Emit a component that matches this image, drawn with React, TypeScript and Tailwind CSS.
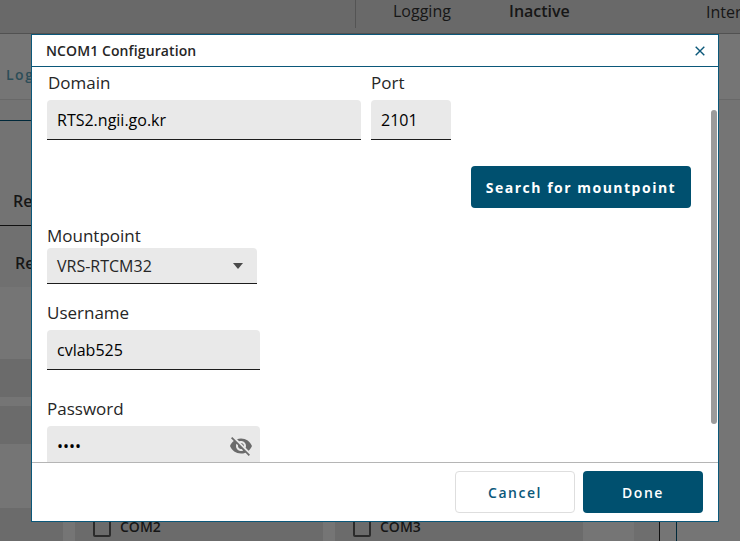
import React from "react";

const label = "text-[17px] leading-6 text-[#262626]";
const field =
  "flex items-center rounded-t-[4px] border-b border-[#1c1c1c] bg-[#e9e9e9] px-[10px] text-[16px] text-black";

function StatusHeader() {
  return (
    <header className="flex h-[34px] items-start border-b border-[#515151] bg-[#696969] text-[16px] leading-[22px] text-[#161616]">
      <div className="h-[28px] w-[356px] shrink-0 border-r border-[#545454]" />
      <span className="ml-[37px] w-[116px] shrink-0">Logging</span>
      <span className="w-[197px] shrink-0 font-semibold">Inactive</span>
      <span className="mt-px whitespace-nowrap">Inter</span>
    </header>
  );
}

function PortCell({ name, className }: { name: string; className: string }) {
  return (
    <div className={"flex h-full bg-[#6b6b6b] pl-[18px] text-[14px] font-semibold text-[#161616] " + className}>
      <span className="mt-[10px] h-[19px] w-[18px] rounded-[2px] border-2 border-[#2b2b2b]" />
      <span className="ml-[9px] mt-[9px] leading-5">{name}</span>
    </div>
  );
}

function Backdrop() {
  return (
    <div className="flex h-[541px] w-[740px] flex-col overflow-hidden bg-[#757575]">
      <StatusHeader />
      <nav className="flex h-[66px] items-center border-b border-[#686868] pl-[6px] pt-4 text-[14px] font-semibold tracking-[1.5px] text-[#2c4d58]">
        Log
      </nav>
      <div className="h-[20px] bg-[#737373]" />
      <section className="flex flex-1">
        <div className="flex w-[677px] flex-col border-r border-t border-[#00293a] text-[16px] font-semibold text-[#161616]">
          <div className="flex h-[105px] items-end border-b border-[#101010] bg-[#737373] pb-[12px] pl-[13px]">Re</div>
          <div className="flex h-[61px] items-center bg-[#707070] pl-[15px] pt-[13px]">Re</div>
          <div className="h-[72px]" />
          <div className="h-[38px] bg-[#6b6b6b]" />
          <div className="h-[9px]" />
          <div className="h-[38px] bg-[#6b6b6b]" />
          <div className="h-[64px]" />
          <div className="flex h-[33px]">
            <div className="w-[63px] bg-[#6b6b6b]" />
            <PortCell name="COM2" className="ml-[12px] w-[248px]" />
            <PortCell name="COM3" className="ml-[12px] w-[248px]" />
            <div className="ml-[51px] w-[26px] border-r border-[#101010] bg-[#6e6e6e]" />
          </div>
        </div>
      </section>
    </div>
  );
}

function HiddenEye() {
  return (
    <svg viewBox="0 0 24 24" className="h-6 w-6 fill-[#6b6b6b]">
      <path d="M12 7c2.76 0 5 2.24 5 5 0 .65-.13 1.26-.36 1.83l2.92 2.92c1.51-1.26 2.7-2.89 3.43-4.75-1.73-4.39-6-7.5-11-7.5-1.4 0-2.74.25-3.98.7l2.16 2.16C10.74 7.13 11.35 7 12 7zM2 4.27l2.28 2.28.46.46C3.08 8.3 1.78 10.02 1 12c1.73 4.39 6 7.5 11 7.5 1.55 0 3.03-.3 4.38-.84l.42.42L19.73 22 21 20.73 3.27 3 2 4.27zM7.53 9.8l1.55 1.55c-.05.21-.08.43-.08.65 0 1.66 1.34 3 3 3 .22 0 .44-.03.65-.08l1.55 1.55c-.67.33-1.41.53-2.2.53-2.76 0-5-2.24-5-5 0-.79.2-1.53.53-2.2zm4.31-.78l3.15 3.15.02-.16c0-1.66-1.34-3-3-3l-.17.01z" />
    </svg>
  );
}

function Dialog() {
  return (
    <div className="absolute left-[31px] top-[34px] flex h-[488px] w-[688px] flex-col border border-[#0b587a] bg-white">
      <div className="flex h-[32px] shrink-0 items-center justify-between border-b border-[#0b587a] pl-[14px] pr-[13px]">
        <h1 className="text-[14px] font-semibold tracking-[0.1px] text-[#262626]">NCOM1 Configuration</h1>
        <svg viewBox="0 0 10 10" className="h-[10px] w-[10px] stroke-[#0b587a]" strokeWidth="1.4">
          <path d="M0.7 0.7L9.3 9.3M9.3 0.7L0.7 9.3" />
        </svg>
      </div>
      <div className="flex min-h-0 flex-1 justify-between overflow-hidden">
        <div className="box-content flex w-[644px] shrink-0 flex-col pl-[15px] pt-[4px]">
          <div className="flex gap-[10px]">
            <div className="w-[314px]">
              <div className={label + " pl-px"}>Domain</div>
              <div className={field + " mt-[5px] h-[40px]"}>RTS2.ngii.go.kr</div>
            </div>
            <div className="w-[80px]">
              <div className={label}>Port</div>
              <div className={field + " mt-[5px] h-[40px]"}>2101</div>
            </div>
          </div>
          <button className="mt-[26px] h-[42px] w-[220px] shrink-0 self-end rounded-[4px] bg-[#00506f] text-[14px] font-bold tracking-[1.5px] text-white">
            Search for mountpoint
          </button>
          <div className={label + " mt-[16px]"}>Mountpoint</div>
          <div className={field + " h-[36px] w-[210px] shrink-0 justify-between pr-[14px]"}>
            <span className="text-[#262626]">VRS-RTCM32</span>
            <svg viewBox="0 0 10 6" className="h-[6px] w-[10px] fill-[#4a4a4a]">
              <path d="M0 0H10L5 6Z" />
            </svg>
          </div>
          <div className={label + " mt-[17px]"}>Username</div>
          <div className={field + " mt-[5px] h-[40px] w-[213px] shrink-0"}>cvlab525</div>
          <div className={label + " mt-[27px]"}>Password</div>
          <div className={field + " mt-[5px] h-[40px] w-[213px] shrink-0 justify-between pr-[7px]"}>
            <span>••••</span>
            <HiddenEye />
          </div>
        </div>
        <div className="mr-px mt-[43px] h-[314px] w-[6px] rounded-full bg-[#9b9b9b]" />
      </div>
      <div className="flex h-[59px] shrink-0 justify-end gap-2 border-t border-[#b5b5b5] pr-[15px] pt-[8px] text-[14px] font-semibold tracking-[1.5px]">
        <button className="h-[42px] w-[120px] rounded-[4px] border border-[#dedede] text-[#0b587a]">Cancel</button>
        <button className="h-[42px] w-[120px] rounded-[4px] bg-[#00506f] text-white">Done</button>
      </div>
    </div>
  );
}

export default function App() {
  return (
    <div className="relative h-[541px] w-[740px] overflow-hidden font-['Open_Sans',sans-serif]">
      <Backdrop />
      <Dialog />
    </div>
  );
}
